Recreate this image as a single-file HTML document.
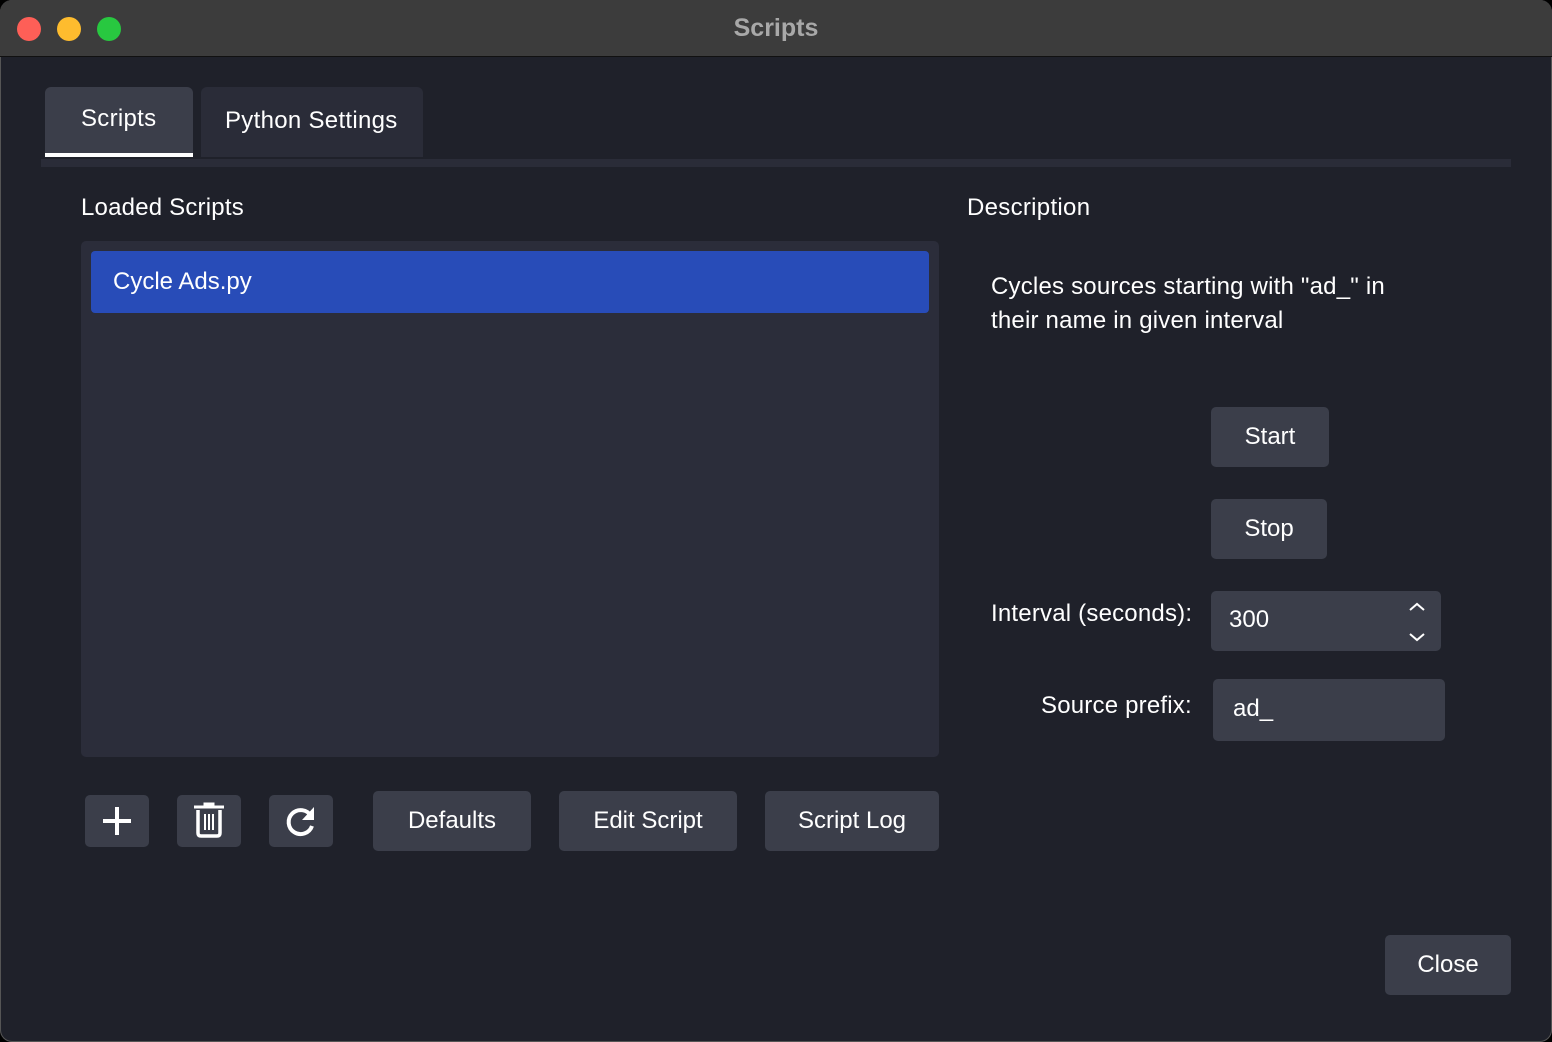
<!DOCTYPE html>
<html><head><style>
*{margin:0;padding:0;box-sizing:border-box}
body{width:1552px;height:1042px;background:#000;font-family:"Liberation Sans",sans-serif;color:#fff;overflow:hidden}
.win{position:absolute;left:0;top:0;width:1552px;height:1042px;background:#1f212a;border-radius:12px;overflow:hidden;box-shadow:inset 0 0 0 1px #555}
.title{position:absolute;left:0;top:0;width:100%;height:57px;background:#3c3c3c;border-bottom:1px solid #111;text-align:center;line-height:56px;font-size:25px;font-weight:bold;color:#a8a8a8}
.dot{position:absolute;top:17px;width:24px;height:24px;border-radius:50%}
.a{position:absolute}
.btn{position:absolute;background:#3b3e4a;border-radius:5px;text-align:center;font-size:24px;color:#fff}
.t{position:absolute;font-size:24px;white-space:nowrap}
</style></head><body>
<div class="win">
<div class="title">Scripts
<div class="dot" style="left:17px;background:#fe5f57"></div>
<div class="dot" style="left:57px;background:#febc2e"></div>
<div class="dot" style="left:97px;background:#28c840"></div>
</div>
<div class="a" style="left:45px;top:87px;width:148px;height:70px;background:#3b3e4a;border-radius:6px 6px 0 0"></div>
<div class="a" style="left:45px;top:153px;width:148px;height:4px;background:#fff"></div>
<div class="t" style="left:81px;top:105px;letter-spacing:0.3px">Scripts</div>
<div class="a" style="left:201px;top:87px;width:222px;height:70px;background:#2a2c38;border-radius:6px 6px 0 0"></div>
<div class="t" style="left:225px;top:107px;letter-spacing:0.3px">Python Settings</div>
<div class="a" style="left:41px;top:159px;width:1470px;height:8px;background:#2a2c38"></div>

<div class="t" style="left:81px;top:194px;letter-spacing:0.2px">Loaded Scripts</div>
<div class="a" style="left:81px;top:241px;width:858px;height:516px;background:#2b2d3a;border-radius:5px"></div>
<div class="a" style="left:91px;top:251px;width:838px;height:62px;background:#284cb8;border-radius:4px"></div>
<div class="t" style="left:113px;top:268px">Cycle Ads.py</div>

<div class="btn" style="left:85px;top:795px;width:64px;height:52px"><svg width="64" height="52"><path d="M32 12V40M18 26H46" stroke="#fff" stroke-width="4"/></svg></div>
<div class="btn" style="left:177px;top:795px;width:64px;height:52px"><svg width="64" height="52"><path d="M17 12H47M28 12V9H36V12" stroke="#fff" stroke-width="3" fill="none"/><path d="M21 15V38Q21 41 24 41H40Q43 41 43 38V15" stroke="#fff" stroke-width="3.5" fill="none"/><path d="M28 19V35M32 19V35M36 19V35" stroke="#fff" stroke-width="2"/></svg></div>
<div class="btn" style="left:269px;top:795px;width:64px;height:52px"><svg width="64" height="52"><path d="M42 21A12 12 0 1 0 43 31" stroke="#fff" stroke-width="4" fill="none"/><path d="M45 12V25H33Z" fill="#fff"/></svg></div>
<div class="btn" style="left:373px;top:791px;width:158px;height:60px;line-height:60px">Defaults</div>
<div class="btn" style="left:559px;top:791px;width:178px;height:60px;line-height:60px">Edit Script</div>
<div class="btn" style="left:765px;top:791px;width:174px;height:60px;line-height:60px">Script Log</div>

<div class="t" style="left:967px;top:194px;letter-spacing:0.3px">Description</div>
<div class="t" style="left:991px;top:270px;line-height:34px;letter-spacing:0.2px">Cycles sources starting with "ad_" in<br>their name in given interval</div>
<div class="btn" style="left:1211px;top:407px;width:118px;height:60px;line-height:60px">Start</div>
<div class="btn" style="left:1211px;top:499px;width:116px;height:60px;line-height:60px">Stop</div>
<div class="t" style="left:991px;top:600px;letter-spacing:0.2px">Interval (seconds):</div>
<div class="btn" style="left:1211px;top:591px;width:230px;height:60px;text-align:left"><span class="t" style="left:18px;top:15px">300</span>
<svg class="a" style="left:196px;top:8px" width="20" height="44"><path d="M3 11L10 5L17 11M3 35L10 41L17 35" stroke="#fff" stroke-width="2" fill="none"/></svg></div>
<div class="t" style="left:1041px;top:692px;letter-spacing:0.2px">Source prefix:</div>
<div class="btn" style="left:1213px;top:679px;width:232px;height:62px;text-align:left"><span class="t" style="left:20px;top:16px">ad_</span></div>

<div class="btn" style="left:1385px;top:935px;width:126px;height:60px;line-height:60px">Close</div>
</div>
</body></html>
